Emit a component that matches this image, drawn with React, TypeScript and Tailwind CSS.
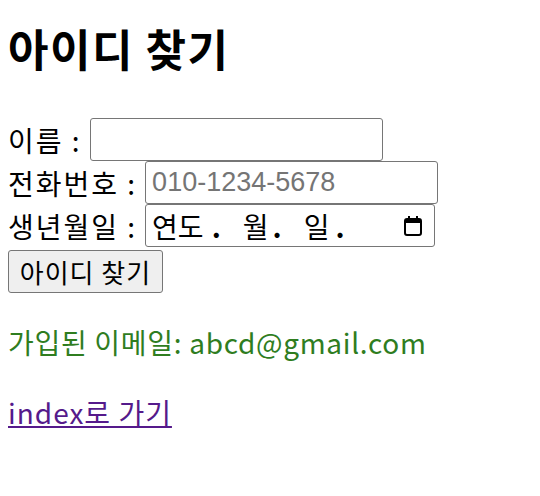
export default function App() {
  const font = "font-['Noto_Sans_CJK_KR','Noto_Sans',sans-serif]";
  const inputCls =
    "h-[43px] border border-[#767676] rounded-[3px] px-[6px] text-[27px] font-['Liberation_Sans','Noto_Sans_CJK_KR',sans-serif] bg-white outline-none placeholder:text-[#757575]";
  const label = "text-[28px] tracking-[2px]";

  return (
    <div className={`px-2 text-black ${font}`}>
      <h1 className="text-[44px] font-bold leading-none tracking-[1.5px] pt-[26px] pb-[48px]">아이디 찾기</h1>

      <form className="flex flex-col" onSubmit={(e) => e.preventDefault()}>
        <div className="flex items-center h-[43px]">
          <span className={label}>이름 :</span>
          <input type="text" className={`${inputCls} ml-[8px] w-[293px]`} />
        </div>
        <div className="flex items-center h-[43px]">
          <span className={label}>전화번호 :</span>
          <input type="text" placeholder="010-1234-5678" className={`${inputCls} ml-[8px] w-[293px]`} />
        </div>
        <div className="flex items-center h-[43px]">
          <span className={label}>생년월일 :</span>
          <div className={`${inputCls} ml-[8px] w-[290px] flex items-center justify-between ${font}`}>
            <span className="flex items-center text-black text-[28px]">
              <span>연도</span>
              <span className="ml-[8px] font-bold">.</span>
              <span className="ml-[22px]">월</span>
              <span className="ml-[4px] font-bold">.</span>
              <span className="ml-[22px]">일</span>
              <span className="ml-[6px] font-bold">.</span>
            </span>
            <svg width="20" height="22" viewBox="0 0 20 22" className="mr-[5px]">
              <rect x="2" y="4" width="16" height="16" rx="2" fill="none" stroke="black" strokeWidth="2" />
              <rect x="2" y="4" width="16" height="4" fill="black" />
              <rect x="5" y="1" width="2" height="4" fill="black" />
              <rect x="13" y="1" width="2" height="4" fill="black" />
            </svg>
          </div>
        </div>
        <div className="mt-[3px]">
          <button
            type="submit"
            className="h-[43px] w-[155px] border border-[#767676] rounded-[3px] bg-[#efefef] text-[26px] tracking-[1px]"
          >
            아이디 찾기
          </button>
        </div>
      </form>

      <p className="text-[#2f7d1f] text-[28px] tracking-[0.7px] mt-[28px]">가입된 이메일: abcd@gmail.com</p>

      <a href="#" className="block mt-[28px] text-[28px] tracking-[1px] text-[#551a8b] underline w-fit">
        index로 가기
      </a>
    </div>
  );
}
